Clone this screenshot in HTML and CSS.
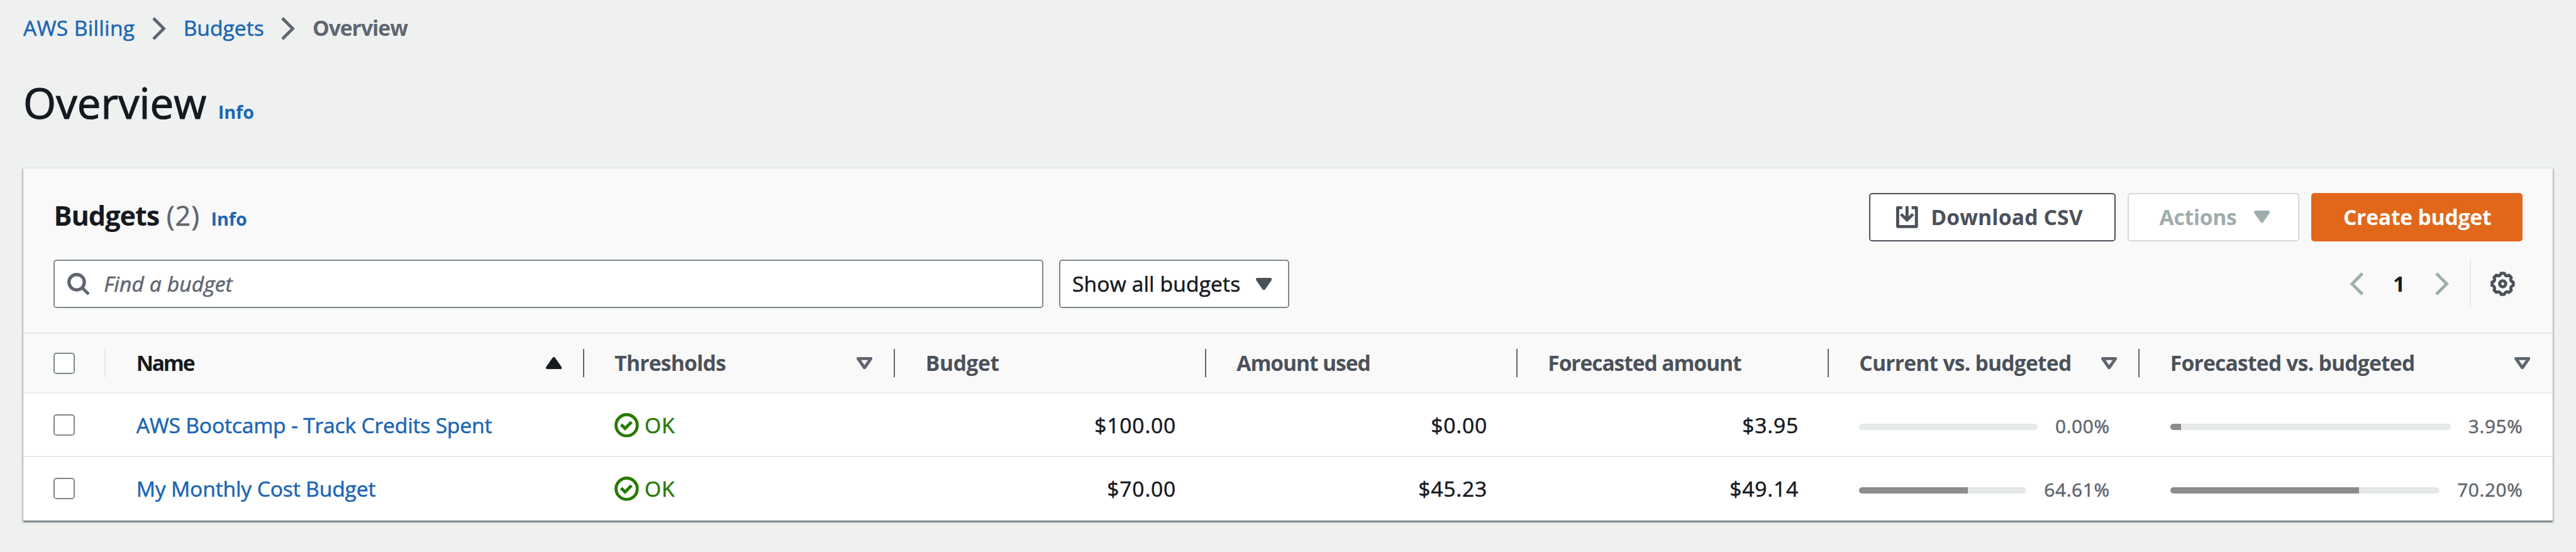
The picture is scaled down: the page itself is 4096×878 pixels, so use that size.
FILE: index.html
```html
<!DOCTYPE html>
<html lang="en">
<head>
<meta charset="utf-8">
<title>AWS Billing - Budgets Overview</title>
<link rel="stylesheet" href="styles.css">
</head>
<body>
<svg class="defs" aria-hidden="true">
  <symbol id="chevron" viewBox="0 0 23 38"><path d="M2 2L19 19L2 36" fill="none" stroke="currentColor" stroke-width="5"/></symbol>
  <symbol id="caret" viewBox="0 0 26 20"><path d="M2.5 2.5H23.5L13 17.5Z" fill="currentColor" stroke="currentColor" stroke-width="5" stroke-linejoin="round"/></symbol>
  <symbol id="caret-up" viewBox="0 0 26 20"><path d="M2.5 17.5H23.5L13 2.5Z" fill="currentColor" stroke="currentColor" stroke-width="5" stroke-linejoin="round"/></symbol>
  <symbol id="sort" viewBox="0 0 26 20"><path d="M2.5 2.5H23.5L13 17.5Z" fill="none" stroke="currentColor" stroke-width="5" stroke-linejoin="round"/></symbol>
  <symbol id="ok" viewBox="0 0 40 40"><g fill="none" stroke="currentColor" stroke-width="5"><circle cx="20" cy="20" r="17.4"/><path d="M11 18.8L17.4 25.2L28 14.6"/></g></symbol>
</svg>

<nav class="breadcrumb">
  <a class="crumb crumb-billing">AWS Billing</a>
  <svg class="chevron"><use href="#chevron"/></svg>
  <a class="crumb">Budgets</a>
  <svg class="chevron"><use href="#chevron"/></svg>
  <span class="crumb current">Overview</span>
</nav>

<header class="page-title">
  <h1>Overview</h1>
  <a class="info">Info</a>
</header>

<main class="panel">
  <section class="toolbar">
    <div class="bar">
      <div class="heading">
        <h2>Budgets</h2>
        <span class="count">(2)</span>
        <a class="info">Info</a>
      </div>
      <div class="actions">
        <button class="btn download">
          <svg class="icon-download" viewBox="0 0 36 36"><g fill="none" stroke="currentColor" stroke-width="5" stroke-linejoin="round"><path d="M10 2.5H2.5V33.3H33.2V2.5H25.3"/><path d="M17.8 0V21M8 13L17.8 22.6L27.6 13" stroke-linejoin="miter"/></g></svg>
          <span>Download CSV</span>
        </button>
        <button class="btn disabled"><span>Actions</span><svg class="caret"><use href="#caret"/></svg></button>
        <button class="btn primary"><span>Create budget</span></button>
      </div>
    </div>
    <div class="bar">
      <div class="filters">
        <div class="search">
          <svg class="icon-search" viewBox="0 0 37 37"><g fill="none" stroke="currentColor" stroke-width="5.4"><circle cx="15.3" cy="15.3" r="12.6"/><path d="M24 24L35 35" stroke-width="5"/></g></svg>
          <span class="placeholder">Find a budget</span>
        </div>
        <div class="select"><span>Show all budgets</span><svg class="caret"><use href="#caret"/></svg></div>
      </div>
      <div class="paging">
        <svg class="chevron prev"><use href="#chevron"/></svg>
        <span class="page">1</span>
        <svg class="chevron"><use href="#chevron"/></svg>
        <span class="rule"></span>
        <svg class="icon-gear" viewBox="0 0 40 40"><g fill="none" stroke="currentColor" stroke-width="5"><circle cx="20" cy="20" r="5"/><path stroke-linejoin="round" d="M17.41 2.69H22.59Q24.59 8.91 30.41 5.93L34.07 9.59Q31.09 15.41 37.31 17.41V22.59Q31.09 24.59 34.07 30.41L30.41 34.07Q24.59 31.09 22.59 37.31H17.41Q15.41 31.09 9.59 34.07L5.93 30.41Q8.91 24.59 2.69 22.59V17.41Q8.91 15.41 5.93 9.59L9.59 5.93Q15.41 8.91 17.41 2.69Z"/></g></svg>
      </div>
    </div>
  </section>

  <section class="table">
    <div class="row head">
      <div class="cell check"><span class="checkbox"></span><span class="divider light"></span></div>
      <div class="cell sorted"><span class="label name">Name</span><svg class="caret"><use href="#caret-up"/></svg><span class="divider"></span></div>
      <div class="cell"><span class="label thresholds">Thresholds</span><svg class="caret"><use href="#sort"/></svg><span class="divider"></span></div>
      <div class="cell"><span class="label budget">Budget</span><span class="divider"></span></div>
      <div class="cell"><span class="label used">Amount used</span><span class="divider"></span></div>
      <div class="cell"><span class="label used">Forecasted amount</span><span class="divider"></span></div>
      <div class="cell"><span class="label">Current vs. budgeted</span><svg class="caret"><use href="#sort"/></svg><span class="divider"></span></div>
      <div class="cell"><span class="label">Forecasted vs. budgeted</span><svg class="caret"><use href="#sort"/></svg><span class="divider none"></span></div>
    </div>
    <div class="row">
      <div class="cell check"><span class="checkbox"></span></div>
      <div class="cell"><a class="bootcamp">AWS Bootcamp - Track Credits Spent</a></div>
      <div class="cell"><span class="status"><svg class="icon-ok"><use href="#ok"/></svg><span>OK</span></span></div>
      <div class="cell amount">$100.00</div>
      <div class="cell amount">$0.00</div>
      <div class="cell amount">$3.95</div>
      <div class="cell progress"><span class="track"></span><span class="percent">0.00%</span></div>
      <div class="cell progress"><span class="track"><span class="fill" style="width:3.95%"></span></span><span class="percent">3.95%</span></div>
    </div>
    <div class="row last">
      <div class="cell check"><span class="checkbox"></span></div>
      <div class="cell"><a class="monthly">My Monthly Cost Budget</a></div>
      <div class="cell"><span class="status"><svg class="icon-ok"><use href="#ok"/></svg><span>OK</span></span></div>
      <div class="cell amount">$70.00</div>
      <div class="cell amount">$45.23</div>
      <div class="cell amount">$49.14</div>
      <div class="cell progress"><span class="track"><span class="fill" style="width:65.1%"></span></span><span class="percent">64.61%</span></div>
      <div class="cell progress"><span class="track"><span class="fill" style="width:70%"></span></span><span class="percent">70.20%</span></div>
    </div>
  </section>
</main>
</body>
</html>
```
FILE: styles.css
```css
* { box-sizing: border-box; }

html { font-size: 9.7154px; }

body {
  margin: 0;
  min-height: 100vh;
  padding: 2.4rem 3.8rem 0;
  background: #eff1f0;
  color: #16191f;
  font-family: "Open Sans", "Noto Sans", sans-serif;
  font-size: 3.46rem;
  line-height: 4.4rem;
  white-space: nowrap;
  -webkit-text-stroke: 0.55px;
}

svg { display: block; flex: none; }
.defs { position: absolute; width: 0; height: 0; }
a { color: #1b66b3; }
h1, h2 { margin: 0; }
h2, .info, .current, .label, .btn, .page { -webkit-text-stroke: 0; }

.chevron { width: 2.3rem; height: 3.8rem; }
.caret { width: 2.6rem; height: 2rem; }

/* Breadcrumb and page title */
.breadcrumb { display: flex; align-items: center; height: 4.4rem; color: #5f666f; }
.breadcrumb .chevron { margin: 0.2rem 2.85rem 0 2.8rem; }
.crumb-billing { letter-spacing: 0.0096em; }
.current { font-weight: bold; letter-spacing: -0.0296em; }

.page-title { display: flex; align-items: baseline; height: 9rem; margin-top: 5.6rem; line-height: 9rem; }
.page-title h1 { font-size: 6.9rem; font-weight: normal; letter-spacing: 0.0014em; -webkit-text-stroke: 1.2px; }
.info { font-size: 2.96rem; font-weight: bold; }
.page-title .info { margin-left: 1.9rem; }

/* Panel */
.panel {
  width: 414rem;
  margin-top: 6rem;
  border-top: 2px solid #e6eae9;
  background: #fff;
  box-shadow: 0 3px 2px 0 rgba(0, 28, 36, 0.35), 2px 2px 2px 0 rgba(0, 28, 36, 0.2), -2px 2px 2px 0 rgba(0, 28, 36, 0.2);
}
.toolbar {
  display: flex;
  flex-direction: column;
  gap: 3rem;
  height: 27.1rem;
  padding: 3.95rem 5rem 0;
  background: #f9f9f9;
  border-bottom: 2px solid #e6eae9;
}
.bar { display: flex; justify-content: space-between; align-items: center; height: 7.95rem; }
.heading { display: flex; align-items: baseline; padding-top: 0.1rem; font-size: 4.45rem; }
.heading h2 { font-size: inherit; letter-spacing: -0.0241em; }
.count { margin-left: 1.2rem; color: #5f666f; letter-spacing: 0.0225em; }
.heading .info { margin-left: 1.8rem; }

.actions { display: flex; gap: 2rem; }
.btn {
  display: flex;
  align-items: center;
  height: 7.95rem;
  padding: 0;
  border: 2px solid #4b515a;
  border-radius: 0.5rem;
  background: #fff;
  color: #4b515a;
  font: bold 3.46rem/4.4rem "Open Sans", "Noto Sans", sans-serif;
}
.download { width: 40.3rem; padding-left: 4.2rem; gap: 2.1rem; letter-spacing: 0.0046em; }
.icon-download { width: 3.6rem; height: 3.6rem; }
.disabled { width: 28.1rem; padding-left: 5rem; gap: 2.8rem; border-color: #d3dada; color: #9fadad; letter-spacing: -0.0078em; }
.primary { width: 34.5rem; padding-left: 5rem; border-color: #e1681a; background: #e1681a; color: #fff; letter-spacing: -0.006em; }

.filters { display: flex; gap: 2.5rem; }
.search, .select {
  display: flex;
  align-items: center;
  height: 7.95rem;
  border: 2px solid #7c8989;
  border-radius: 0.5rem;
  background: #fff;
}
.search { width: 162rem; padding-left: 2rem; gap: 2.3rem; color: #5f666f; }
.icon-search { width: 3.7rem; height: 3.7rem; }
.placeholder { font-style: italic; letter-spacing: 0.0031em; }
.select { width: 37.7rem; padding-left: 2rem; gap: 2.5rem; letter-spacing: 0.0036em; }
.select .caret { color: #4b515a; }

.paging { display: flex; align-items: center; color: #9fadad; padding-right: 1.2rem; }
.prev { transform: scaleX(-1); }
.page { width: 11.7rem; text-align: center; color: #16191f; font-weight: bold; }
.rule { width: 2px; height: 7.9rem; margin: 0 3.2rem 0 3.4rem; background: #e3e8e7; }
.icon-gear { width: 4rem; height: 4rem; color: #4b515a; }

/* Table */
.row {
  display: grid;
  grid-template-columns: 13.5rem 78.3rem 50.9rem 50.9rem 50.95rem 50.95rem 50.9rem 1fr;
  height: 10.4rem;
  border-bottom: 2px solid #e6eae9;
}
.row.last { border-bottom: 0; padding-bottom: 0.2rem; }
.row:not(.head) .cell { padding-top: 0.2rem; }
.cell { display: flex; align-items: center; padding-left: 5rem; min-width: 0; }
.checkbox { width: 3.5rem; height: 3.5rem; border: 2px solid #7c8989; border-radius: 0.5rem; background: #fff; }

.head { height: 9.7rem; background: #f9f9f9; color: #4b515a; }
.label { flex: 1; font-weight: bold; letter-spacing: -0.0231em; }
.name { letter-spacing: -0.0651em; }
.thresholds { letter-spacing: -0.0238em; }
.budget { letter-spacing: -0.0129em; }
.used { letter-spacing: -0.033em; }
.sorted { color: #16191f; }
.head .caret { margin-right: 3.5rem; }
.cell:not(.sorted) .caret { color: #5f666f; }
.divider { width: 2px; height: 4.7rem; background: #5f666f; }
.light { margin-left: auto; background: #e3e8e7; }
.none { background: none; }

.bootcamp { letter-spacing: -0.0054em; }
.monthly { letter-spacing: -0.004em; }
.status { display: flex; align-items: center; gap: 0.9rem; color: #277a00; letter-spacing: 0.03em; }
.icon-ok { width: 4rem; height: 4rem; }
.amount { justify-content: flex-end; padding-right: 4.9rem; letter-spacing: 0.025em; }

.progress { gap: 2.9rem; padding-right: 4.9rem; }
.row:not(.head) .progress { padding-top: 0.8rem; }
.track { flex: 1; height: 1rem; border-radius: 0.5rem; background: #e5e9e9; overflow: hidden; }
.fill { display: block; height: 100%; background: #8c8c8c; }
.percent { color: #5f666f; font-size: 3.06rem; letter-spacing: 0.022em; margin-top: -0.1rem; }
```
